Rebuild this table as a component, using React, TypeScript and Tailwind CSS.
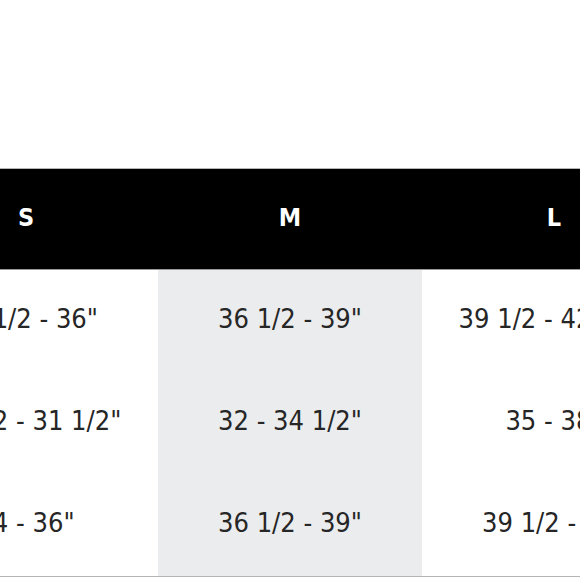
const sizes = ['S', 'M', 'L']

const rows = [
  ['33 1/2 - 36"', '36 1/2 - 39"', '39 1/2 - 42 1/2"'],
  ['28 1/2 - 31 1/2"', '32 - 34 1/2"', '35 - 38"'],
  ['34 - 36"', '36 1/2 - 39"', '39 1/2 - 42"'],
]

export default function App() {
  return (
    <div
      className="w-[580px] h-[580px] overflow-hidden bg-white"
      style={{ fontFamily: '"DejaVu Sans Condensed", "DejaVu Sans", sans-serif' }}
    >
      <div className="h-[168px]" />
      <div className="-ml-[106px] w-[792px] border-t border-[#b5b5b5] border-b">
        {/* Header */}
        <div className="flex h-[101px] bg-black border-b border-[#9a9a9a]">
          {sizes.map((s) => (
            <div
              key={s}
              className="w-[264px] flex items-center justify-center pb-[2px] text-white text-[25px] font-bold"
            >
              {s}
            </div>
          ))}
        </div>

        {/* Body */}
        <div className="flex">
          {sizes.map((s, col) => (
            <div
              key={s}
              className={`w-[264px] flex flex-col ${col === 1 ? 'bg-[#ebecee]' : 'bg-white'}`}
            >
              {rows.map((r, i) => (
                <div
                  key={i}
                  className="h-[102px] flex items-center justify-center pb-[3px] text-[27px] text-[#262626]"
                >
                  {r[col]}
                </div>
              ))}
            </div>
          ))}
        </div>
      </div>
    </div>
  )
}
